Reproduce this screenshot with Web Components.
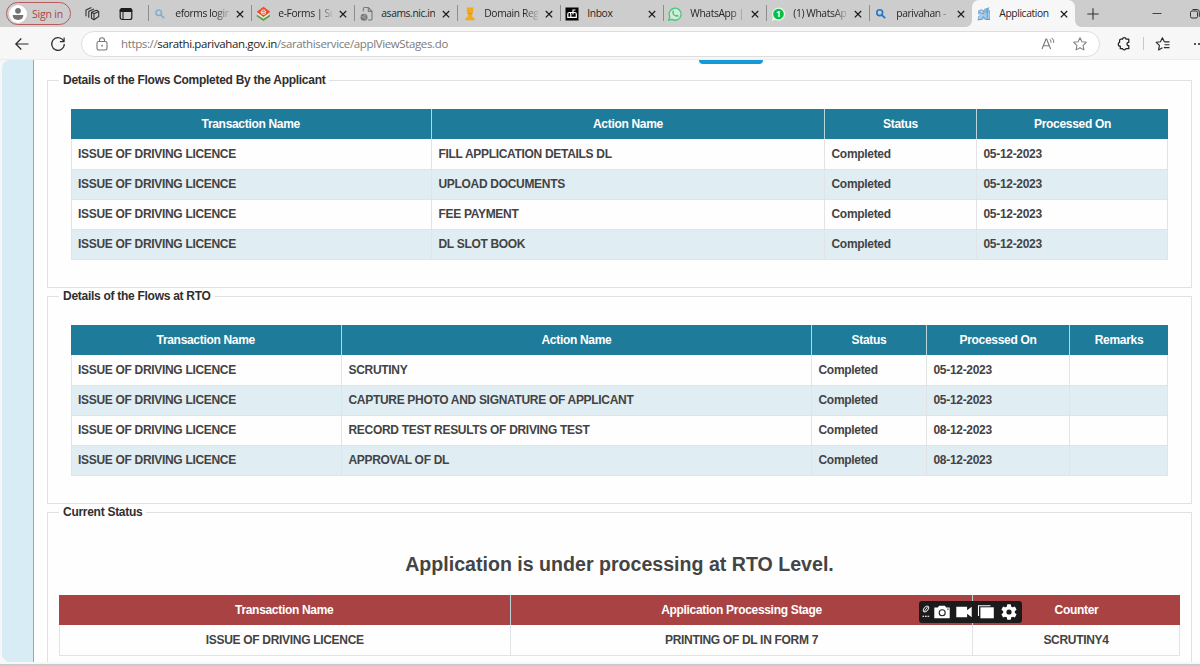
<!DOCTYPE html>
<html lang="en">
<head>
<meta charset="utf-8">
<title>Application Status</title>
<style>
    html, body {
        margin: 0;
        height: 666px;
        overflow: hidden;
    }
    body {
        display: flex;
        flex-direction: column;
        background: #f7f7f7;
        font-family: "Liberation Sans", Arial, sans-serif;
    }
</style>
</head>
<body>
<tab-strip>
    <browser-tab icon="searchPale">eforms login</browser-tab>
    <browser-tab icon="eforms">e-Forms | Su</browser-tab>
    <browser-tab icon="file">asams.nic.in</browser-tab>
    <browser-tab icon="domain">Domain Reg</browser-tab>
    <browser-tab icon="mailbox">Inbox</browser-tab>
    <browser-tab icon="whatsapp">WhatsApp |</browser-tab>
    <browser-tab icon="badge">(1) WhatsAp</browser-tab>
    <browser-tab icon="search">parivahan -</browser-tab>
    <browser-tab icon="sarathi" active>Application</browser-tab>
</tab-strip>
<address-bar><span slot="scheme">https://</span><span slot="host">sarathi.parivahan.gov.in</span><span slot="path">/sarathiservice/applViewStages.do</span></address-bar>
<page-view>
    <flow-section>
        <span slot="title">Details of the Flows Completed By the Applicant</span>
        <stage-table style="--cols: 361px 393px 152px 191px">
            <stage-row head><span>Transaction Name</span><span>Action Name</span><span>Status</span><span>Processed On</span></stage-row>
            <stage-row><span>ISSUE OF DRIVING LICENCE</span><span>FILL APPLICATION DETAILS DL</span><span>Completed</span><span>05-12-2023</span></stage-row>
            <stage-row alt><span>ISSUE OF DRIVING LICENCE</span><span>UPLOAD DOCUMENTS</span><span>Completed</span><span>05-12-2023</span></stage-row>
            <stage-row><span>ISSUE OF DRIVING LICENCE</span><span>FEE PAYMENT</span><span>Completed</span><span>05-12-2023</span></stage-row>
            <stage-row alt><span>ISSUE OF DRIVING LICENCE</span><span>DL SLOT BOOK</span><span>Completed</span><span>05-12-2023</span></stage-row>
        </stage-table>
    </flow-section>
    <flow-section>
        <span slot="title">Details of the Flows at RTO</span>
        <stage-table style="--cols: 271px 470px 115px 143px 98px">
            <stage-row head><span>Transaction Name</span><span>Action Name</span><span>Status</span><span>Processed On</span><span>Remarks</span></stage-row>
            <stage-row><span>ISSUE OF DRIVING LICENCE</span><span>SCRUTINY</span><span>Completed</span><span>05-12-2023</span><span></span></stage-row>
            <stage-row alt><span>ISSUE OF DRIVING LICENCE</span><span>CAPTURE PHOTO AND SIGNATURE OF APPLICANT</span><span>Completed</span><span>05-12-2023</span><span></span></stage-row>
            <stage-row><span>ISSUE OF DRIVING LICENCE</span><span>RECORD TEST RESULTS OF DRIVING TEST</span><span>Completed</span><span>08-12-2023</span><span></span></stage-row>
            <stage-row alt><span>ISSUE OF DRIVING LICENCE</span><span>APPROVAL OF DL</span><span>Completed</span><span>08-12-2023</span><span></span></stage-row>
        </stage-table>
    </flow-section>
    <flow-section wide>
        <span slot="title">Current Status</span>
        <status-message>Application is under processing at RTO Level.</status-message>
        <stage-table style="--cols: 452px 462px 207px; --head: #a94343; --align: center">
            <stage-row head><span>Transaction Name</span><span>Application Processing Stage</span><span>Counter</span></stage-row>
            <stage-row><span>ISSUE OF DRIVING LICENCE</span><span>PRINTING OF DL IN FORM 7</span><span>SCRUTINY4</span></stage-row>
        </stage-table>
    </flow-section>
</page-view>
<capture-bar></capture-bar>

<script>
const ICONS = {
    person: `<circle cx="9" cy="9" r="9" fill="#fff"/><circle cx="9" cy="5.800" r="2.900" fill="#77716f"/><path d="M3.700 10h10.600c0 3.300-2.200 4.900-5.300 4.900S3.700 13.300 3.700 10z" fill="#77716f"/>`,
    workspaces: `<g fill="none" stroke="#333" stroke-width="1.100" stroke-linejoin="round"><path d="M8.500 7.300l5-2 2.200 1.200v5l-4.700 3.200-2.500-1.500z"/><path d="M8.500 7.300l2.500 1.500v5.900M11 8.800l4.700-2.300"/><path d="M5.800 12.700V6.300l5.200-2.400M3 11.300V5l5.400-2.500"/></g>`,
    tabs: `<rect x="3.200" y="3.500" width="11.600" height="11" rx="2" fill="none" stroke="#1c1c1c" stroke-width="1.200"/><path d="M3.200 6.500V5.500a2 2 0 0 1 2-2h7.600a2 2 0 0 1 2 2v1z" fill="#1c1c1c" stroke="#1c1c1c"/><path d="M6 6.500v8" stroke="#1c1c1c" stroke-width="1"/>`,
    searchPale: `<circle cx="7.700" cy="7.700" r="2.800" fill="none" stroke="#7eafd2" stroke-width="1.500"/><path d="M9.800 9.800l3.500 3.400" stroke="#7eafd2" stroke-width="1.700"/>`,
    search: `<circle cx="7.700" cy="7.700" r="2.900" fill="none" stroke="#2277c5" stroke-width="1.600"/><path d="M9.800 9.800l3.300 3.400" stroke="#2277c5" stroke-width="1.800"/>`,
    eforms: `<path d="M2.800 9.500L9.500 13.700l6.500-4.200v2L9.500 16l-6.700-4.500z" fill="#57a642"/><path d="M3.500 8.800l6 4 6-4" fill="none" stroke="#fff" stroke-width=".8"/><path d="M9.500 1.800l6.700 5-6.700 5.200-6.700-5.200z" fill="#ef4b26"/><path d="M7.200 7.200h4.500c0-3-4.500-3-4.500 0 0 2.300 3 2.600 4.600 1.300" fill="none" stroke="#fff" stroke-width="1"/>`,
    file: `<path d="M6.300 6.500V3.800c0-.8.500-1.300 1.300-1.300h3.700l3.700 3.700v7.500c0 .8-.5 1.300-1.300 1.300H11M11.300 2.700v3.700H15" fill="none" stroke="#777" stroke-width="1.100"/><circle cx="7" cy="12.200" r="3.500" fill="#777"/><path d="M4.500 11.700l3 .5 1 2M6.700 9.700l2.200 1.500" stroke="#ccc" stroke-width=".7" fill="none"/>`,
    domain: `<path d="M6.500 2.500h7l-.5 1.500q1 3-1.200 4.500l.7 3.500 2 1.500v1.700h-9v-1.700l2-1.500.7-3.500Q6 7 7 4z" fill="#f2a91c"/><path d="M7.300 8h5.400v1H7.300z" fill="#e39408"/>`,
    mailbox: `<rect x="2.500" y="2.500" width="13" height="13" fill="#050505"/><path d="M4.800 12.300V9a1.500 1.500 0 0 1 3 0v3.300zM6.300 7.500h5.500a1.500 1.500 0 0 1 1.500 1.500v3.300H7.800M10 9.500V5h2.500" fill="none" stroke="#fff" stroke-width="1.200"/>`,
    whatsapp: `<path d="M2.800 15.300l1-3.300a6 6 0 1 1 2.200 2.300z" fill="#d8eadf" stroke="#47c979" stroke-width="1.400"/><path d="M6.500 6c.7-1 1.300-.2 1.700 1l-.6.900c.6 1.200 1.300 1.800 2.500 2.400l.9-.8 1.700.9c-.2 1.600-1.700 1.700-3 1.200-2-.8-4.300-3-3.200-5.600z" fill="#47c979"/>`,
    badge: `<path d="M2.800 15.700l1-3.700a6.500 6.500 0 1 1 2.500 2.700z" fill="#e8f7ec"/><circle cx="9.500" cy="9" r="5.300" fill="#08bf3d"/><text x="9.500" y="12" font-family="Open Sans, sans-serif" font-weight="700" font-size="8.500" text-anchor="middle" fill="#fff">1</text>`,
    sarathi: `<path d="M3 5.500l4-1.500 1 1.500-2.500 1V9l2.500 1v4.500H3v-3.500h1.500V9.500L3 9zM9 4l5.500-2-.8 2.500 1.300 1v8.500l-2 1V8L9.500 9z" fill="#83b9de"/><path d="M4 8h10v6.500H4z" fill="#a9cde6"/><path d="M2.500 14.800l4-.3 2-3 2 3h4.500M5 7.500l4.500 1.500M12.200 3v11" fill="none" stroke="#5b9dcb" stroke-width="1"/><circle cx="8.500" cy="6.500" r="1.400" fill="#9aa9b3"/>`,
    close: `<path d="M5.800 6l6.400 6.400M12.200 6l-6.400 6.400" stroke="#1d1d1d" stroke-width="1.250"/>`,
    plus: `<path d="M9 3.300v11.400M3.300 9h11.400" stroke="#333" stroke-width="1.100"/>`,
    minus: `<path d="M4.500 8.500h9" stroke="#444" stroke-width="1"/>`,
    restore: `<rect x="4.500" y="6" width="7" height="7" rx="1.500" fill="none" stroke="#333" stroke-width="1"/><path d="M6.500 4.500h4.500a2.300 2.300 0 0 1 2.300 2.300v5" fill="none" stroke="#333" stroke-width="1"/>`,
    back: `<path d="M15.500 9H3M8.300 3.500L2.800 9l5.500 5.500" fill="none" stroke="#2b2b2b" stroke-width="1.200"/>`,
    refresh: `<path d="M14.700 6.300A6.300 6.300 0 1 0 15.300 9M15.100 2.500v4.200h-4.200" fill="none" stroke="#2b2b2b" stroke-width="1.200"/>`,
    lock: `<rect x="4" y="6.500" width="10" height="8.500" rx="1.700" fill="none" stroke="#777" stroke-width="1.100"/><path d="M6.500 6.300V5.200a2.500 2.500 0 0 1 5 0v1.100" fill="none" stroke="#777" stroke-width="1.100"/><circle cx="9" cy="10.700" r=".9" fill="#777"/>`,
    readAloud: `<path d="M3 14L7 4h.6l4 10M4.300 10.800h6" fill="none" stroke="#777" stroke-width="1.100"/><path d="M11 4.300q1.300 1.500 1 3.400M12.800 2.800q2.400 2.200 2 5" fill="none" stroke="#777" stroke-width="1"/>`,
    star: `<path d="M9 2.700l1.900 4 4.400.6-3.200 3.100.8 4.500L9 12.800l-3.900 2.100.8-4.500-3.200-3.100 4.400-.6z" fill="none" stroke="#808080" stroke-width="1.050" stroke-linejoin="round"/>`,
    puzzle: `<path d="M6 4.200h1.500c.3-2 3.300-2 3.600 0h2.700v3.100c-2.400-.3-2.400 3.700 0 3.400v3h-2.900c-.3 1.700-3 1.700-3.300 0H5.300v-2.500C2.800 11.400 2.600 8 4.600 7.300V5.600c0-.9.500-1.400 1.400-1.400z" fill="none" stroke="#222" stroke-width="1.250" stroke-linejoin="round"/>`,
    favorites: `<path d="M10.300 6.800L8.400 2.800l-1.900 4-4.300.5 3.200 3.100-.8 4.500 3.800-2.100M10.300 6.800h5.200M10.500 9.700h5M9.800 12.600h5.700" fill="none" stroke="#2b2b2b" stroke-width="1.150" stroke-linejoin="round"/>`,
    dots: `<g fill="#222"><circle cx="5" cy="9" r="1"/><circle cx="9" cy="9" r="1"/><circle cx="13" cy="9" r="1"/></g>`,
    grip: `<g fill="none" stroke="#ddd" stroke-width="1"><ellipse cx="7" cy="6" rx="3.300" ry="2" transform="rotate(-50 7 6)"/><path d="M5 8.800l4-5.500"/></g><g fill="#e8c9d0"><rect x="3.500" y="12.700" width="1.700" height="1.300"/><rect x="6" y="12.700" width="1.700" height="1.300"/><rect x="8.500" y="12.700" width="1.700" height="1.300"/></g>`,
    camera: `<path d="M1.300 4.500h3.500l1.300-1.800h5.800l1.300 1.800h3.500v10.800H1.300z" fill="#fff"/><circle cx="9.200" cy="9.700" r="3" fill="none" stroke="#222" stroke-width="1.100"/><rect x="14.300" y="5.600" width="1.200" height="1.200" fill="#222"/>`,
    video: `<path d="M1.300 3.700h10.800v3.600l4.600-3.600v10.600l-4.600-3.600v3.600H1.300z" fill="#fff"/>`,
    windows: `<path d="M1.500 13V2.700h12" fill="none" stroke="#fff" stroke-width="1.100"/><rect x="3.400" y="4.300" width="13.400" height="11" fill="#fff"/>`,
    gear: `<g fill="#fff"><circle cx="9" cy="9" r="5.900"/><rect x="7" y="1.200" width="4" height="15.600" rx=".8"/><rect x="7" y="1.200" width="4" height="15.600" rx=".8" transform="rotate(60 9 9)"/><rect x="7" y="1.200" width="4" height="15.600" rx=".8" transform="rotate(120 9 9)"/></g><circle cx="9" cy="9" r="2.600" fill="#1b1b1b"/>`,
};

const define = (name, markup) => {
    customElements.define(name, class extends HTMLElement {
        constructor() {
            super();
            this.attachShadow({ mode: "open" });
        }

        connectedCallback() {
            this.shadowRoot.innerHTML = typeof markup === "function" ? markup(this) : markup;
        }
    });
};

define("ui-icon", (el) => `
<style>
    :host { display: block; width: 18px; height: 18px; flex: none; }
    svg { display: block; width: 100%; height: 100%; }
</style>
<svg viewBox="${el.getAttribute("name") === "grip" ? "0 0 14 18" : "0 0 18 18"}">${ICONS[el.getAttribute("name")]}</svg>`);

define("browser-tab", (el) => `
<style>
    :host {
        display: flex;
        align-items: center;
        box-sizing: border-box;
        width: 103px;
        height: 27px;
        padding-left: 3px;
        position: relative;
        flex: none;
        color: #262626;
        font: 10.300px/27px "Open Sans", "Noto Sans", sans-serif;
    }
    :host::before {
        content: "";
        position: absolute;
        left: 0;
        top: 5px;
        width: 1px;
        height: 16px;
        background: #8d8d8d;
    }
    :host([active]) { background: #f7f7f7; border-radius: 7px 7px 0 0; }
    :host([active])::before, :host([active])::after {
        left: -6px;
        top: auto;
        bottom: 0;
        width: 6px;
        height: 6px;
        background: radial-gradient(circle at 0 0, transparent 5.500px, #f7f7f7 6px);
    }
    :host([active])::after {
        content: "";
        position: absolute;
        left: auto;
        right: -6px;
        background: radial-gradient(circle at 100% 0, transparent 5.500px, #f7f7f7 6px);
    }
    .label {
        width: 54px;
        margin: 0 1.300px 0 6px;
        overflow: hidden;
        white-space: nowrap;
        letter-spacing: -.4px;
        -webkit-mask-image: linear-gradient(90deg, #000 40px, rgba(0, 0, 0, .15) 54px);
        mask-image: linear-gradient(90deg, #000 40px, rgba(0, 0, 0, .15) 54px);
    }
    .label.full { -webkit-mask-image: none; mask-image: none; }
</style>
<ui-icon name="${el.getAttribute("icon")}"></ui-icon>
<span class="label ${/Inbox|asams|Application/.test(el.textContent) ? "full" : ""}"><slot></slot></span>
<ui-icon name="close"></ui-icon>`);

define("tab-strip", `
<style>
    :host {
        display: flex;
        align-items: center;
        height: 27px;
        flex: none;
        background: #cdcdcd;
        overflow: hidden;
    }
    .signin {
        display: flex;
        align-items: center;
        box-sizing: border-box;
        width: 65px;
        height: 23px;
        margin: 0 12px 0 6px;
        padding-left: 2px;
        gap: 5px;
        border: 1.500px solid #b9595c;
        border-radius: 12px;
        color: #b04448;
        font: 10.500px/20px "Open Sans", sans-serif;
        white-space: nowrap;
        letter-spacing: -.2px;
        flex: none;
    }
    .tools { display: flex; gap: 16px; width: 65.300px; flex: none; }
    .plus { margin-left: 8.700px; }
    .min { margin-left: 46px; }
    .restore { margin-left: 20px; }
</style>
<div class="signin"><ui-icon name="person"></ui-icon>Sign in</div>
<div class="tools"><ui-icon name="workspaces"></ui-icon><ui-icon name="tabs"></ui-icon></div>
<slot></slot>
<ui-icon class="plus" name="plus"></ui-icon>
<ui-icon class="min" name="minus"></ui-icon>
<ui-icon class="restore" name="restore"></ui-icon>`);

define("address-bar", `
<style>
    :host {
        display: flex;
        align-items: center;
        height: 33px;
        flex: none;
        padding: 1px 0 0 13px;
        background: #f7f7f7;
        overflow: hidden;
        border-bottom: 1px solid #ececec;
        box-sizing: border-box;
    }
    .refresh { margin-left: 18px; }
    .field {
        display: flex;
        align-items: center;
        box-sizing: border-box;
        width: 1019px;
        height: 26px;
        margin-left: 14px;
        padding: 0 10px 0 11px;
        border: 1px solid #dedede;
        border-radius: 13px;
        background: #fff;
        flex: none;
    }
    .url {
        flex: 1;
        margin-left: 10px;
        color: #7b7b7b;
        font: 11.500px/24px "Open Sans", "Noto Sans", sans-serif;
        letter-spacing: -.37px;
        white-space: nowrap;
    }
    ::slotted([slot="host"]) { color: #1d1d1d; }
    .star { margin-left: 14px; }
    .puzzle { margin-left: 15px; }
    i { width: 1px; height: 13px; margin: 0 10px; background: #c8c8c8; flex: none; }
    .dots { margin-left: 18px; }
</style>
<ui-icon name="back"></ui-icon>
<ui-icon class="refresh" name="refresh"></ui-icon>
<div class="field">
    <ui-icon name="lock"></ui-icon>
    <div class="url"><slot name="scheme"></slot><slot name="host"></slot><slot name="path"></slot></div>
    <ui-icon name="readAloud"></ui-icon>
    <ui-icon class="star" name="star"></ui-icon>
</div>
<ui-icon class="puzzle" name="puzzle"></ui-icon>
<i></i>
<ui-icon name="favorites"></ui-icon>
<ui-icon class="dots" name="dots"></ui-icon>`);

define("page-view", `
<style>
    :host { display: block; height: 606px; position: relative; }
    .page {
        display: flex;
        box-sizing: border-box;
        height: 602px;
        margin-left: 2px;
        border-radius: 8px 0 0 8px;
        background: #fefefe;
        overflow: hidden;
    }
    .rail { width: 31px; flex: none; background: #d8ecf6; border-right: 1px solid #63b9e6; }
    .body { flex: 1; padding: 0 8px 0 13px; }
    .active-step {
        width: 64px;
        height: 4px;
        margin: 0 0 8px 652px;
        border-radius: 0 0 4px 4px;
        background: #149bd7;
    }
    .edge { height: 2px; margin-top: 2px; background: #cbcbcb; }
</style>
<div class="page">
    <div class="rail"></div>
    <div class="body"><div class="active-step"></div><slot></slot></div>
</div>
<div class="edge"></div>`);

define("flow-section", `
<style>
    :host { display: block; height: 216px; }
    fieldset {
        box-sizing: border-box;
        height: 216px;
        min-width: 0;
        margin: 0;
        padding: 21px 23px 0;
        border: 1px solid #dfe2e4;
    }
    :host([wide]) fieldset { padding: 29px 11px 0; }
    legend {
        margin-left: -12px;
        padding: 0 4px;
        color: #2f2f2f;
        font-size: 12px;
        font-weight: bold;
        line-height: 16px;
        letter-spacing: -.28px;
    }
    :host([wide]) legend { margin-left: 0; }
</style>
<fieldset>
    <legend><slot name="title"></slot></legend>
    <slot></slot>
</fieldset>`);

define("status-message", `
<style>
    :host {
        display: block;
        height: 46px;
        color: #444;
        font-size: 19.600px;
        font-weight: bold;
        line-height: 30px;
        text-align: center;
    }
</style>
<slot></slot>`);

define("stage-table", `
<style>
    :host { display: block; }
</style>
<slot></slot>`);

define("stage-row", `
<style>
    :host {
        display: grid;
        grid-template-columns: var(--cols);
        height: 30px;
        color: #434343;
        font-size: 12px;
        font-weight: bold;
        line-height: 31px;
        letter-spacing: -.31px;
        text-align: var(--align, left);
    }
    /* one pixel taller than the row, so borders land on the next row's edge */
    ::slotted(span) {
        box-sizing: border-box;
        height: 31px;
        padding: 0 6.500px;
        border-right: 1px solid #e0e4e6;
        border-bottom: 1px solid #e0e4e6;
        white-space: nowrap;
    }
    ::slotted(span:first-child) { padding-left: 6px; border-left: 1px solid #e0e4e6; }
    :host([alt]) { background: #e0edf3; }
    :host([head]) {
        background: var(--head, #1f7b9a);
        color: #fff;
        line-height: 30px;
        text-align: center;
    }
    :host([head]) ::slotted(span) { height: 30px; border-color: #bcd3dc; border-bottom: 0; }
    :host([head]) ::slotted(span:first-child) { border-left: 0; }
    :host([head]) ::slotted(span:last-child) { border-right: 0; }
</style>
<slot></slot>`);

define("capture-bar", `
<style>
    :host {
        display: flex;
        align-items: center;
        position: absolute;
        left: 919px;
        top: 601px;
        box-sizing: border-box;
        width: 103px;
        height: 22px;
        border-radius: 3px;
        background: #1b1b1b;
    }
    ui-icon { margin-right: 4.200px; }
    ui-icon:first-of-type { width: 14px; height: 18px; margin-right: 0; }
</style>
<ui-icon name="grip"></ui-icon>
<ui-icon name="camera"></ui-icon>
<ui-icon name="video"></ui-icon>
<ui-icon name="windows"></ui-icon>
<ui-icon name="gear"></ui-icon>`);
</script>
</body>
</html>
